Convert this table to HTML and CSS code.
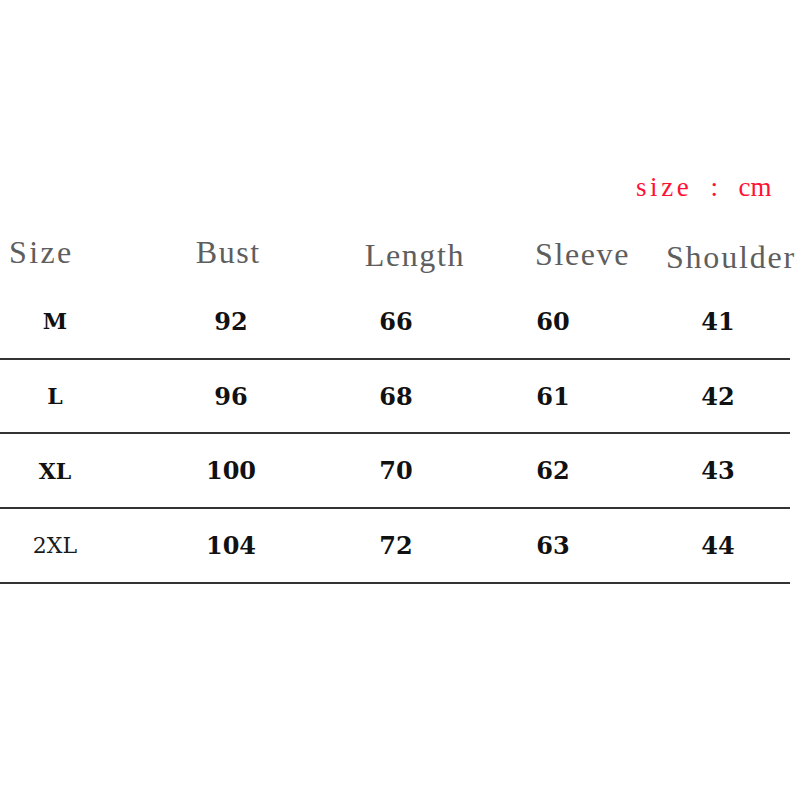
FILE: index.html
```html
<!DOCTYPE html>
<html>
<head>
<meta charset="utf-8">
<link rel="stylesheet" href="styles.css">
</head>
<body>
<div class="page">
  <div class="unit-row"><span class="unit">size</span><span class="unit unit-colon">:</span><span class="unit unit-cm">cm</span></div>
  <div class="head">
    <span class="h h-size">Size</span>
    <span class="h h-bust">Bust</span>
    <span class="h h-length">Length</span>
    <span class="h h-sleeve">Sleeve</span>
    <span class="h h-shoulder">Shoulder</span>
  </div>
  <div class="table">
    <div class="row"><span class="sz">M</span><span>92</span><span>66</span><span>60</span><span>41</span></div>
    <div class="row"><span class="sz">L</span><span>96</span><span>68</span><span>61</span><span>42</span></div>
    <div class="row"><span class="sz">XL</span><span>100</span><span>70</span><span>62</span><span>43</span></div>
    <div class="row"><span class="sz sz-light">2XL</span><span>104</span><span>72</span><span>63</span><span>44</span></div>
  </div>
</div>
</body>
</html>
```

FILE: styles.css
```css
html, body {
  margin: 0;
  padding: 0;
  background: #ffffff;
}

.page {
  width: 800px;
  height: 800px;
  padding-top: 170px;
  box-sizing: border-box;
}

.unit-row {
  display: flex;
  align-items: baseline;
  padding-left: 636px;
  height: 36px;
}

.unit {
  font-family: "Liberation Serif", serif;
  font-size: 27px;
  letter-spacing: 3.6px;
  color: #ff1133;
  line-height: 35px;
  white-space: pre;
}

.unit-colon { margin-left: 18px; }
.unit-cm { margin-left: 17px; letter-spacing: 0; }

.head {
  display: flex;
  align-items: flex-start;
  padding-left: 9px;
  margin-top: 26px;
  height: 53px;
  font-family: "Liberation Serif", serif;
  font-size: 32px;
  letter-spacing: 1.6px;
  color: #5e5e5e;
  line-height: 40px;
}

.h { display: block; white-space: nowrap; }
.h-size { letter-spacing: 2.4px; }
.h-bust { margin-left: 122px; }
.h-length { margin-left: 104px; margin-top: 3px; }
.h-sleeve { margin-left: 70px; margin-top: 2px; }
.h-shoulder { margin-left: 36px; margin-top: 5px; letter-spacing: 1.8px; }

.table {
  width: 790px;
}

.row {
  display: grid;
  grid-template-columns: 110px 242px 88px 226px 104px;
  align-items: center;
  height: 72.7px;
  border-bottom: 2px solid #333333;
  font-family: "DejaVu Serif", serif;
  font-weight: bold;
  font-size: 24px;
  color: #111111;
  text-align: center;
}

.sz {
  font-size: 22px;
}

.sz-light {
  font-weight: normal;
  color: #1a1a1a;
}
```
